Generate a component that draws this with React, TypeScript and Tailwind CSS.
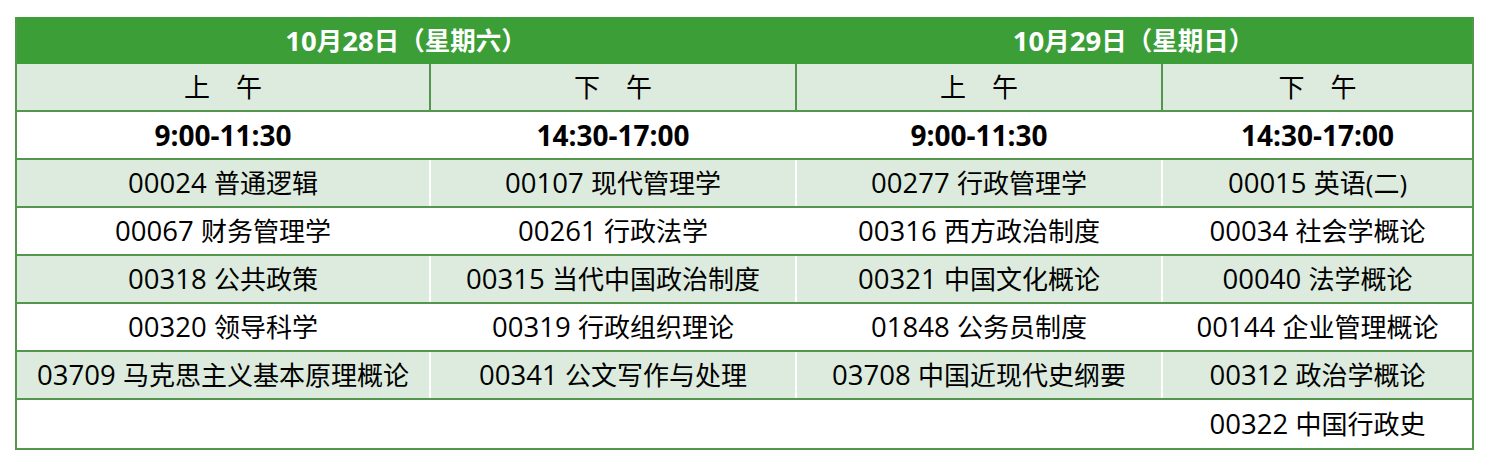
import React from "react";

const FONT = "font-['Open_Sans','Noto_Sans_CJK_SC',sans-serif]";

const cols = "grid grid-cols-[412px_364px_364px_309px] gap-x-[2px]";

const rows: string[][] = [
  ["00024 普通逻辑", "00107 现代管理学", "00277 行政管理学", "00015 英语(二)"],
  ["00067 财务管理学", "00261 行政法学", "00316 西方政治制度", "00034 社会学概论"],
  ["00318 公共政策", "00315 当代中国政治制度", "00321 中国文化概论", "00040 法学概论"],
  ["00320 领导科学", "00319 行政组织理论", "01848 公务员制度", "00144 企业管理概论"],
  ["03709 马克思主义基本原理概论", "00341 公文写作与处理", "03708 中国近现代史纲要", "00312 政治学概论"],
  ["", "", "", "00322 中国行政史"],
];

function Course({ text }: { text: string }) {
  if (!text) return null;
  const idx = text.indexOf(" ");
  const code = text.slice(0, idx);
  const name = text.slice(idx + 1);
  return (
    <span className="whitespace-nowrap">
      <span className="text-[27.5px]">{code} </span>
      <span className="text-[26px]">{name}</span>
    </span>
  );
}

function DateHead({ day, week }: { day: string; week: string }) {
  return (
    <div className="flex items-center justify-center">
      <span className="text-[27.5px]">10</span>
      <span className="text-[25.5px]">月</span>
      <span className="text-[27.5px]">{day}</span>
      <span className="text-[25.5px]">日（星期{week}）</span>
    </div>
  );
}

export default function App() {
  return (
    <div className={`w-[1490px] h-[464px] bg-white ${FONT} text-black`}>
      <div className="pt-[17px] pl-[15px]">
        <div className="w-[1459px] border-l-2 border-r-2 border-b-2 border-[#55964f]">
          {/* Date header */}
          <div className="grid grid-cols-[778px_677px] h-[47px] bg-[#3b9e37] text-white font-bold">
            <DateHead day="28" week="六" />
            <DateHead day="29" week="日" />
          </div>
          {/* Morning / afternoon */}
          <div className={`${cols} h-[48px] bg-[#55964f] border-b-2 border-[#55964f]`}>
            {["上　午", "下　午", "上　午", "下　午"].map((t, i) => (
              <div key={i} className="bg-[#dcebdd] flex items-center justify-center text-[26px]">
                {t}
              </div>
            ))}
          </div>
          {/* Times */}
          <div className={`${cols} h-[48px] bg-white border-b-2 border-[#55964f]`}>
            {["9:00-11:30", "14:30-17:00", "9:00-11:30", "14:30-17:00"].map((t, i) => (
              <div key={i} className="bg-white flex items-center justify-center text-[28px] font-bold">
                {t}
              </div>
            ))}
          </div>
          {rows.map((r, ri) => (
            <div
              key={ri}
              className={`${cols} h-[48px] bg-white ${ri < rows.length - 1 ? "border-b-2 border-[#55964f]" : ""}`}
            >
              {r.map((t, i) => (
                <div
                  key={i}
                  className={`${ri % 2 === 0 ? "bg-[#dcebdd]" : "bg-white"} flex items-center justify-center`}
                >
                  <Course text={t} />
                </div>
              ))}
            </div>
          ))}
        </div>
      </div>
    </div>
  );
}
